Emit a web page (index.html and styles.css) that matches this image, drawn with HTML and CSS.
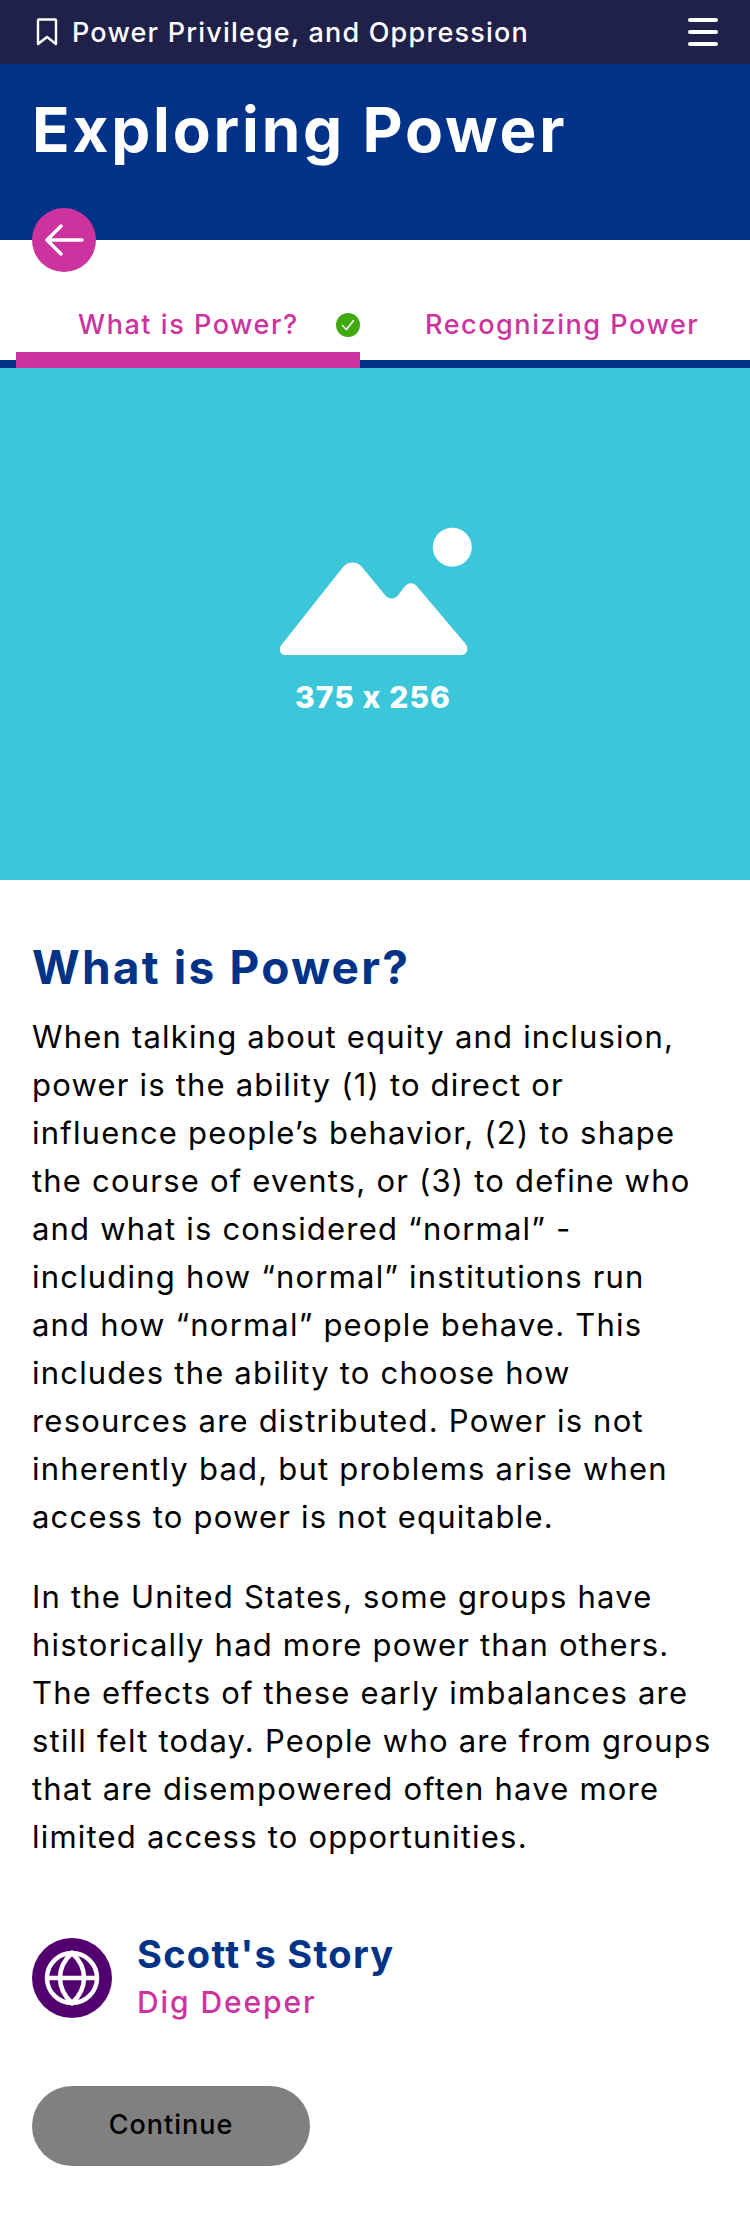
FILE: index.html
```html
<!DOCTYPE html>
<html lang="en">
<head>
<meta charset="utf-8">
<title>Exploring Power</title>
<link rel="stylesheet" href="styles.css">
</head>
<body>
<header class="topbar">
  <div class="topbar-title">
    <svg class="bookmark" width="22" height="28" viewBox="0 0 22 28"><path d="M2 2.500c0-.6.4-1 1-1h16c.6 0 1 .4 1 1v23.500l-9-7-9 7z" fill="none" stroke="#fff" stroke-width="2.400" stroke-linejoin="round"/></svg>
    <span>Power Privilege, and Oppression</span>
  </div>
  <div class="menu"><i></i><i></i><i></i></div>
</header>
<section class="hero">
  <h1>Exploring Power</h1>
  <button class="back" aria-label="Back">
    <svg width="40" height="32" viewBox="0 0 40 32"><path d="M38 16H3M17 2 3 16 17 30" fill="none" stroke="#fff" stroke-width="3.400" stroke-linecap="round" stroke-linejoin="round"/></svg>
  </button>
</section>
<nav class="tabs">
  <div class="tab active">
    <span>What is Power?</span>
    <svg class="check" width="24" height="24" viewBox="0 0 24 24"><circle cx="12" cy="12" r="12" fill="#3fa90f"/><path d="M6.500 12.500l4 4 7-9" fill="none" stroke="#fff" stroke-width="1.500" stroke-linecap="round" stroke-linejoin="round"/></svg>
  </div>
  <div class="tab"><span>Recognizing Power</span></div>
</nav>
<section class="image">
  <svg class="mountain" width="192" height="130" viewBox="0 0 192 130"><path d="M5 128C.5 128-1.500 122.500 1 118.500L63.300 39.700C68 34 77 34 81.700 39.700L105 68C108.500 72.500 115 72.500 118.300 68L124 60.300C128 55 134 55 137.700 60.300L185 116.300C189.500 121.500 187 128 181.700 128Z" fill="#fff"/><circle cx="172.300" cy="20.300" r="19.500" fill="#fff"/></svg>
  <div class="image-label">375 x 256</div>
</section>
<main class="content">
  <h2>What is Power?</h2>
  <p>When talking about equity and inclusion, power is the ability (1) to direct or influence people’s behavior, (2) to shape the course of events, or (3) to define who and what is considered “normal” - including how “normal” institutions run and&nbsp;how “normal” people behave. This includes the ability to choose how resources are distributed. Power is not inherently bad, but problems arise when access to power is not equitable.</p>
  <p>In the United States, some groups have historically had more power than others. The effects of these early imbalances are still felt today. People who are from groups that are disempowered often have more limited access to opportunities.</p>
  <div class="story">
    <div class="globe">
      <svg width="56" height="56" viewBox="0 0 56 56" fill="none" stroke="#fff" stroke-width="4.500"><circle cx="28" cy="28" r="25"/><path d="M3 28h50M28 3C19 11 16 19 16 28S19 45 28 53C37 45 40 37 40 28S37 11 28 3Z"/></svg>
    </div>
    <div class="story-text">
      <div class="story-title">Scott's Story</div>
      <div class="story-sub">Dig Deeper</div>
    </div>
  </div>
  <button class="continue">Continue</button>
</main>
</body>
</html>
```

FILE: styles.css
```css
* { box-sizing: border-box; }
html, body { margin: 0; padding: 0; }
body { width: 750px; height: 2230px; background: #fff; font-family: "Inter", "Liberation Sans", sans-serif; color: #000; overflow: hidden; font-variant-ligatures: no-contextual; }
.topbar { height: 64px; background: #1f214a; display: flex; align-items: center; justify-content: space-between; padding: 0 32px 0 36px; }
.topbar-title { display: flex; align-items: center; gap: 14px; color: #fff; font-size: 27px; font-weight: 500; letter-spacing: 1.2px; }
.bookmark { flex: none; }
.menu { display: flex; flex-direction: column; gap: 8px; }
.menu i { display: block; width: 30px; height: 4px; border-radius: 2px; background: #fff; }
.hero { position: relative; height: 176px; background: #003387; padding: 30px 32px 0; }
.hero h1 { margin: 0; color: #fff; font-size: 62px; line-height: 72px; font-weight: 700; letter-spacing: 2.8px; }
.back { position: absolute; left: 32px; top: 144px; width: 64px; height: 64px; border-radius: 50%; border: 0; padding: 0; background: #cc339f; display: flex; align-items: center; justify-content: center; }
.tabs { height: 128px; border-bottom: 8px solid #003387; display: flex; padding-left: 16px; }
.tab { height: 120px; display: flex; align-items: flex-end; color: #cc339f; font-size: 27px; font-weight: 500; letter-spacing: 1.55px; padding-bottom: 19px; }
.tab.active { width: 344px; border-bottom: 16px solid #cc339f; height: 128px; padding: 0 0 11px 62px; justify-content: space-between; }
.tab + .tab { margin-left: 65px; }
.check { margin-bottom: 4px; }
.image { height: 512px; background: #3cc6da; display: flex; flex-direction: column; align-items: center; padding-top: 159px; }
.mountain { margin-left: 2px; }
.image-label { margin: 20px 4px 0 0; color: #fff; font-size: 30px; line-height: 40px; font-weight: 800; letter-spacing: 1.1px; }
.content { padding: 56px 32px 0; }
.content h2 { margin: 0 0 15px; color: #003387; font-size: 46px; line-height: 62px; font-weight: 700; letter-spacing: 2.2px; }
.content p { margin: 0 0 32px; font-size: 31px; line-height: 48px; letter-spacing: 1.2px; }
.story { display: flex; align-items: center; gap: 25px; margin-top: 69px; }
.globe { width: 80px; height: 80px; border-radius: 50%; background: #52006f; display: flex; align-items: center; justify-content: center; }
.story-title { color: #003387; font-size: 38px; line-height: 48px; font-weight: 700; letter-spacing: 1.3px; }
.story-sub { color: #cc339f; font-size: 30px; line-height: 48px; font-weight: 500; letter-spacing: 1.9px; }
.continue { display: block; margin-top: 60px; padding: 0 0 3px; width: 278px; height: 80px; border: 0; border-radius: 40px; background: #808080; color: #000; font: 500 27px "Inter", "Liberation Sans", sans-serif; letter-spacing: 1px; }
```
